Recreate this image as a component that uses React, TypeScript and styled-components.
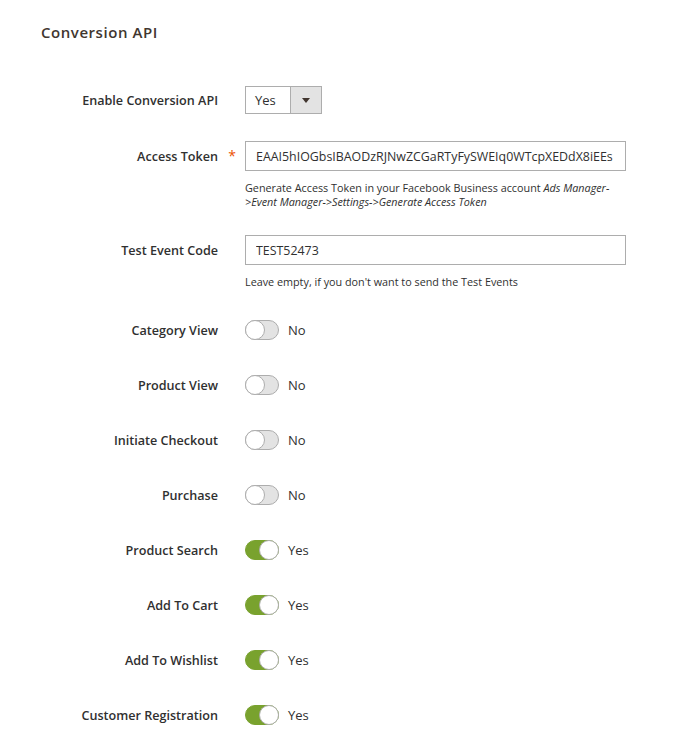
import React from "react";
import styled, { createGlobalStyle } from "styled-components";

const GlobalStyle = createGlobalStyle`
  body {
    margin: 0;
    background: #fff;
    font-family: "Open Sans", "Liberation Sans", sans-serif;
    color: #303030;
  }
`;

type Field =
  | { kind: "select"; label: string; value: string }
  | { kind: "text"; label: string; value: string; required?: boolean; note: React.ReactNode }
  | { kind: "toggle"; label: string; on: boolean };

const fields: Field[] = [
  { kind: "select", label: "Enable Conversion API", value: "Yes" },
  {
    kind: "text",
    label: "Access Token",
    required: true,
    value: "EAAI5hIOGbsIBAODzRJNwZCGaRTyFySWEIq0WTcpXEDdX8iEEs",
    note: (
      <>
        Generate Access Token in your Facebook Business account{" "}
        <em>Ads Manager-&gt;Event Manager-&gt;Settings-&gt;Generate Access Token</em>
      </>
    ),
  },
  {
    kind: "text",
    label: "Test Event Code",
    value: "TEST52473",
    note: "Leave empty, if you don't want to send the Test Events",
  },
  { kind: "toggle", label: "Category View", on: false },
  { kind: "toggle", label: "Product View", on: false },
  { kind: "toggle", label: "Initiate Checkout", on: false },
  { kind: "toggle", label: "Purchase", on: false },
  { kind: "toggle", label: "Product Search", on: true },
  { kind: "toggle", label: "Add To Cart", on: true },
  { kind: "toggle", label: "Add To Wishlist", on: true },
  { kind: "toggle", label: "Customer Registration", on: true },
];

function Toggle({ on }: { on: boolean }) {
  return (
    <ToggleWrapper>
      <Track $on={on}>
        <Thumb $on={on} />
      </Track>
      <ToggleText>{on ? "Yes" : "No"}</ToggleText>
    </ToggleWrapper>
  );
}

function Control({ field }: { field: Field }) {
  if (field.kind === "select") {
    return (
      <Select>
        <SelectValue>{field.value}</SelectValue>
        <SelectArrow>
          <svg width="8" height="5" viewBox="0 0 8 5">
            <path d="M0 0h8L4 5z" fill="#41362f" />
          </svg>
        </SelectArrow>
      </Select>
    );
  }
  if (field.kind === "text") {
    return (
      <>
        <TextInput defaultValue={field.value} readOnly />
        <Note $multi={typeof field.note !== "string"}>{field.note}</Note>
      </>
    );
  }
  return <Toggle on={field.on} />;
}

export default function App() {
  return (
    <>
      <GlobalStyle />
      <Section>
        <Legend>Conversion API</Legend>
        <Form>
          {fields.map((f) => (
            <Row key={f.label}>
              <Label $h={f.kind === "text" ? 30 : 28}>{f.label}</Label>
              <Required $h={f.kind === "text" ? 30 : 28}>
                {f.kind === "text" && f.required ? "*" : ""}
              </Required>
              <Value>
                <Control field={f} />
              </Value>
            </Row>
          ))}
        </Form>
      </Section>
    </>
  );
}

const Section = styled.div`
  padding: 22px 0 0;
`;

const Legend = styled.div`
  padding-left: 41px;
  font-size: 15px;
  line-height: 20px;
  font-weight: 600;
  letter-spacing: 0.55px;
  color: #41362f;
  margin-bottom: 44px;
`;

const Form = styled.div`
  display: flex;
  flex-direction: column;
  gap: 27px;
`;

const Row = styled.div`
  display: grid;
  grid-template-columns: 218px 27px 381px;
  align-items: start;
`;

const Label = styled.div<{ $h: number }>`
  padding-top: 2px;
  text-align: right;
  font-size: 12.6px;
  font-weight: 600;
  line-height: ${(p) => p.$h - 2}px;
  color: #303030;
`;

const Required = styled.div<{ $h: number }>`
  text-align: center;
  padding-left: 1px;
  font-size: 14px;
  line-height: ${(p) => p.$h}px;
  color: #eb5202;
`;

const Value = styled.div`
  display: flex;
  flex-direction: column;
  align-items: flex-start;
`;

const Select = styled.div`
  display: flex;
  width: 77px;
  height: 28px;
  box-sizing: border-box;
  border: 1px solid #adadad;
  background: #fff;
`;

const SelectValue = styled.div`
  flex: 1;
  padding-left: 9px;
  font-size: 13px;
  line-height: 26px;
  color: #303030;
`;

const SelectArrow = styled.div`
  width: 30px;
  display: flex;
  align-items: center;
  justify-content: center;
  background: #e3e3e3;
  border-left: 1px solid #adadad;
`;

const TextInput = styled.input`
  width: 381px;
  height: 30px;
  box-sizing: border-box;
  border: 1px solid #adadad;
  padding: 0 10px;
  font-family: "Open Sans", "Liberation Sans", sans-serif;
  font-size: 12.4px;
  color: #303030;
  outline: none;
`;

const Note = styled.div<{ $multi: boolean }>`
  margin-top: 10px;
  margin-bottom: ${(p) => (p.$multi ? "-1px" : "0")};
  font-size: 10.8px;
  line-height: 14px;
  color: #303030;

  em {
    font-style: italic;
  }
`;

const ToggleWrapper = styled.div`
  display: flex;
  align-items: center;
  height: 28px;
  gap: 9px;
`;

const Track = styled.div<{ $on: boolean }>`
  position: relative;
  width: 34px;
  height: 20px;
  box-sizing: border-box;
  border-radius: 10px;
  border: 1px solid ${(p) => (p.$on ? "#79a22e" : "#adadad")};
  background: ${(p) => (p.$on ? "#79a22e" : "#e3e3e3")};
`;

const Thumb = styled.div<{ $on: boolean }>`
  position: absolute;
  top: -1px;
  left: ${(p) => (p.$on ? "13px" : "-1px")};
  width: 20px;
  height: 20px;
  box-sizing: border-box;
  border-radius: 50%;
  border: 1px solid #adadad;
  background: #fff;
`;

const ToggleText = styled.span`
  font-size: 13px;
  color: #303030;
`;
